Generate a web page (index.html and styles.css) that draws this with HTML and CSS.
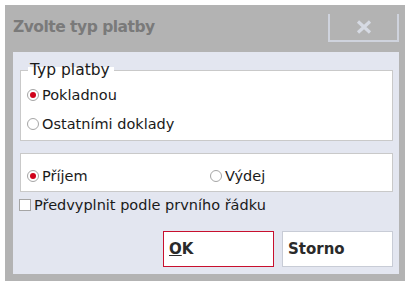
FILE: index.html
```html
<!DOCTYPE html>
<html lang="cs">
<head>
    <meta charset="UTF-8">
    <title>Zvolte typ platby</title>
    <link rel="stylesheet" href="styles.css">
</head>
<body>
    <div class="dialog">
        <div class="title-bar">
            <div class="title">Zvolte typ platby</div>
            <div class="close-btn">
                <svg width="16" height="14" viewBox="0 0 16 14">
                    <path d="M2 1.5 L14 12.5 M14 1.5 L2 12.5" stroke="#d6dae3" stroke-width="3.2" fill="none"/>
                </svg>
            </div>
        </div>

        <div class="panel">
            <fieldset class="group">
                <legend>Typ platby</legend>
                <div class="radio-row">
                    <span class="radio checked"></span>
                    <span>Pokladnou</span>
                </div>
                <div class="radio-row">
                    <span class="radio"></span>
                    <span>Ostatními doklady</span>
                </div>
            </fieldset>

            <div class="group group-inline">
                <div class="radio-row half">
                    <span class="radio checked"></span>
                    <span>Příjem</span>
                </div>
                <div class="radio-row">
                    <span class="radio"></span>
                    <span>Výdej</span>
                </div>
            </div>

            <div class="check-row">
                <span class="checkbox"></span>
                <span>Předvyplnit podle prvního řádku</span>
            </div>

            <div class="buttons">
                <button class="btn btn-default"><u>O</u>K</button>
                <button class="btn">Storno</button>
            </div>
        </div>
    </div>
</body>
</html>
```

FILE: styles.css
```css
* {
    margin: 0;
    padding: 0;
    box-sizing: border-box;
}

body {
    background-color: white;
    font-family: "DejaVu Sans", sans-serif;
    font-size: 14.5px;
    color: #1a1a1a;
}

.dialog {
    margin: 5px 0 0 5px;
    width: 400px;
    height: 276px;
    background-color: #b3b3b3;
    padding: 0 6px 7px 8px;
    display: flex;
    flex-direction: column;
}

.title-bar {
    height: 47px;
    display: flex;
    justify-content: space-between;
    align-items: flex-start;
}

.title {
    margin-top: 13px;
    font-size: 15.5px;
    font-weight: bold;
    letter-spacing: -0.5px;
    color: #7a7a7a;
}

.close-btn {
    margin-top: 9px;
    width: 71px;
    height: 28px;
    border: 2px solid #cfd3dd;
    border-top: none;
    display: flex;
    justify-content: center;
    align-items: center;
}

.panel {
    flex: 1;
    background-color: #e3e6f0;
    padding: 10px 6px 0 7px;
    display: flex;
    flex-direction: column;
}

.group {
    background-color: white;
    border: 1px solid #c9c9c9;
}

fieldset.group {
    height: 79px;
    padding: 2px 6px 0 6px;
}

.group legend {
    margin-left: 1px;
    padding: 0 4px 0 2px;
    font-size: 15.5px;
    line-height: 16px;
    background: linear-gradient(transparent 5px, white 5px);
}

.radio-row {
    display: flex;
    align-items: center;
    gap: 3px;
    height: 29px;
}

.radio {
    width: 12px;
    height: 12px;
    border: 1px solid #a5a5a5;
    border-radius: 50%;
    background-color: white;
    display: flex;
    justify-content: center;
    align-items: center;
}

.radio.checked::after {
    content: "";
    width: 6px;
    height: 6px;
    border-radius: 50%;
    background-color: #d0021b;
}

.group-inline {
    margin-top: 12px;
    height: 39px;
    padding: 7px 6px 0 6px;
    display: flex;
}

.half {
    width: 183px;
}

.check-row {
    margin-top: 2px;
    display: flex;
    align-items: center;
    gap: 3px;
    height: 22px;
    margin-left: -1px;
}

.checkbox {
    width: 12px;
    height: 12px;
    border: 1px solid #a5a5a5;
    background-color: white;
}

.buttons {
    margin-top: 15px;
    display: flex;
    justify-content: flex-end;
    gap: 8px;
}

.btn {
    width: 111px;
    height: 36px;
    background-color: white;
    border: 1px solid #c8ccd6;
    font-family: "DejaVu Sans", sans-serif;
    font-size: 15px;
    font-weight: bold;
    color: #2a2a2a;
    text-align: left;
    padding: 0 5px;
}

.btn-default {
    border-color: #c8102e;
}
```
